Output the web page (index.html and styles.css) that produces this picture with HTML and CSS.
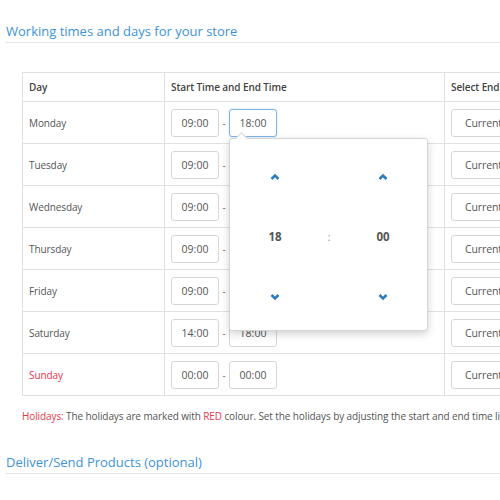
FILE: index.html
```html
<!DOCTYPE html>
<html lang="en">
<head>
    <meta charset="UTF-8">
    <title>Working times</title>
    <link rel="stylesheet" href="styles.css">
</head>
<body>
    <h3 class="section-title">Working times and days for your store</h3>

    <div class="hours-wrap">
        <table class="hours">
            <thead>
                <tr>
                    <th class="col-day">Day</th>
                    <th class="col-time">Start Time and End Time</th>
                    <th>Select End</th>
                </tr>
            </thead>
            <tbody>
                <tr>
                    <td>Monday</td>
                    <td>
                        <div class="time-pair">
                            <input class="time" value="09:00">
                            <span class="dash">-</span>
                            <div class="picker-anchor">
                                <input class="time focused" value="18:00">
                                <div class="picker">
                                    <div class="picker-grid">
                                        <span class="chev"><svg width="10" height="8" viewBox="0 0 10 8"><polyline points="1.5,6 5,2.5 8.5,6" fill="none" stroke="#2f7dbf" stroke-width="2.6"/></svg></span>
                                        <span></span>
                                        <span class="chev"><svg width="10" height="8" viewBox="0 0 10 8"><polyline points="1.5,6 5,2.5 8.5,6" fill="none" stroke="#2f7dbf" stroke-width="2.6"/></svg></span>
                                        <span class="num">18</span>
                                        <span class="sep">:</span>
                                        <span class="num">00</span>
                                        <span class="chev"><svg width="10" height="8" viewBox="0 0 10 8"><polyline points="1.5,2 5,5.5 8.5,2" fill="none" stroke="#2f7dbf" stroke-width="2.6"/></svg></span>
                                        <span></span>
                                        <span class="chev"><svg width="10" height="8" viewBox="0 0 10 8"><polyline points="1.5,2 5,5.5 8.5,2" fill="none" stroke="#2f7dbf" stroke-width="2.6"/></svg></span>
                                    </div>
                                </div>
                            </div>
                        </div>
                    </td>
                    <td><div class="select">Current</div></td>
                </tr>
                <tr>
                    <td>Tuesday</td>
                    <td><div class="time-pair"><input class="time" value="09:00"><span class="dash">-</span><input class="time" value="18:00"></div></td>
                    <td><div class="select">Current</div></td>
                </tr>
                <tr>
                    <td>Wednesday</td>
                    <td><div class="time-pair"><input class="time" value="09:00"><span class="dash">-</span><input class="time" value="18:00"></div></td>
                    <td><div class="select">Current</div></td>
                </tr>
                <tr>
                    <td>Thursday</td>
                    <td><div class="time-pair"><input class="time" value="09:00"><span class="dash">-</span><input class="time" value="18:00"></div></td>
                    <td><div class="select">Current</div></td>
                </tr>
                <tr>
                    <td>Friday</td>
                    <td><div class="time-pair"><input class="time" value="09:00"><span class="dash">-</span><input class="time" value="18:00"></div></td>
                    <td><div class="select">Current</div></td>
                </tr>
                <tr>
                    <td>Saturday</td>
                    <td><div class="time-pair"><input class="time" value="14:00"><span class="dash">-</span><input class="time" value="18:00"></div></td>
                    <td><div class="select">Current</div></td>
                </tr>
                <tr>
                    <td class="holiday">Sunday</td>
                    <td><div class="time-pair"><input class="time" value="00:00"><span class="dash">-</span><input class="time" value="00:00"></div></td>
                    <td><div class="select">Current</div></td>
                </tr>
            </tbody>
        </table>

        <p class="note"><span class="holiday">Holidays:</span> The holidays are marked with <span class="holiday">RED</span> colour. Set the holidays by adjusting the start and end time like 00:00 - 00:00.</p>
    </div>

    <h3 class="section-title second">Deliver/Send Products (optional)</h3>
</body>
</html>
```

FILE: styles.css
```css
* {
    margin: 0;
    padding: 0;
    box-sizing: border-box;
}

body {
    width: 500px;
    height: 500px;
    overflow: hidden;
    background: #fff;
    font-family: "Open Sans", "Liberation Sans", sans-serif;
    font-size: 10px;
    letter-spacing: -0.1px;
    color: #555;
}

.section-title {
    margin: 23px 0 0 5px;
    padding: 0 0 3px 1px;
    font-size: 13px;
    font-weight: normal;
    letter-spacing: 0;
    color: #3d93d6;
    border-bottom: 1px solid #e6e6e6;
    line-height: 16px;
}

.section-title.second {
    margin-top: 30px;
}

.hours-wrap {
    margin: 29px 0 0 22px;
    width: 700px;
}

.hours {
    border-collapse: collapse;
    width: 600px;
    border: 1px solid #e1e1e1;
}

.hours th,
.hours td {
    border: 1px solid #e1e1e1;
    text-align: left;
    vertical-align: middle;
    padding: 0 6px;
}

.hours th {
    height: 29px;
    font-weight: 600;
    color: #444;
}

.hours td {
    height: 42px;
}

.col-day {
    width: 142px;
}

.col-time {
    width: 280px;
}

.holiday {
    color: #e8374a;
}

.time-pair {
    display: flex;
    align-items: center;
}

.time {
    width: 48px;
    height: 28px;
    border: 1px solid #d6d6d6;
    border-radius: 3px;
    font-family: inherit;
    font-size: 10.5px;
    color: #555;
    text-align: center;
    background: #fff;
    outline: none;
}

.time.focused {
    border-color: #7fb5e6;
    box-shadow: 0 0 2px rgba(102, 175, 233, 0.4);
}

.dash {
    width: 10px;
    text-align: center;
    color: #777;
}

.picker-anchor {
    position: relative;
}

.picker {
    position: absolute;
    top: 29px;
    left: 0;
    width: 199px;
    height: 193px;
    background: #fff;
    border: 1px solid #d5d5d5;
    border-radius: 3px;
    box-shadow: 0 3px 8px rgba(0, 0, 0, 0.18);
    z-index: 10;
}

.picker::before {
    content: "";
    position: absolute;
    top: -5px;
    left: 7px;
    width: 8px;
    height: 8px;
    background: #fff;
    border-left: 1px solid #d5d5d5;
    border-top: 1px solid #d5d5d5;
    transform: rotate(45deg);
}

.picker-grid {
    display: grid;
    grid-template-columns: 54px 54px 54px;
    grid-auto-rows: 60px;
    padding: 8px 0 0 18px;
    align-items: center;
    justify-items: center;
}

.chev {
    display: flex;
}

.num {
    font-size: 11.5px;
    font-weight: bold;
    color: #555;
}

.sep {
    color: #888;
}

.select {
    width: 80px;
    height: 28px;
    border: 1px solid #d6d6d6;
    border-radius: 3px;
    padding: 0 0 0 13px;
    line-height: 26px;
    font-size: 10.5px;
    color: #555;
}

.note {
    margin-top: 13px;
    line-height: 15px;
    white-space: nowrap;
    color: #555;
}
```
